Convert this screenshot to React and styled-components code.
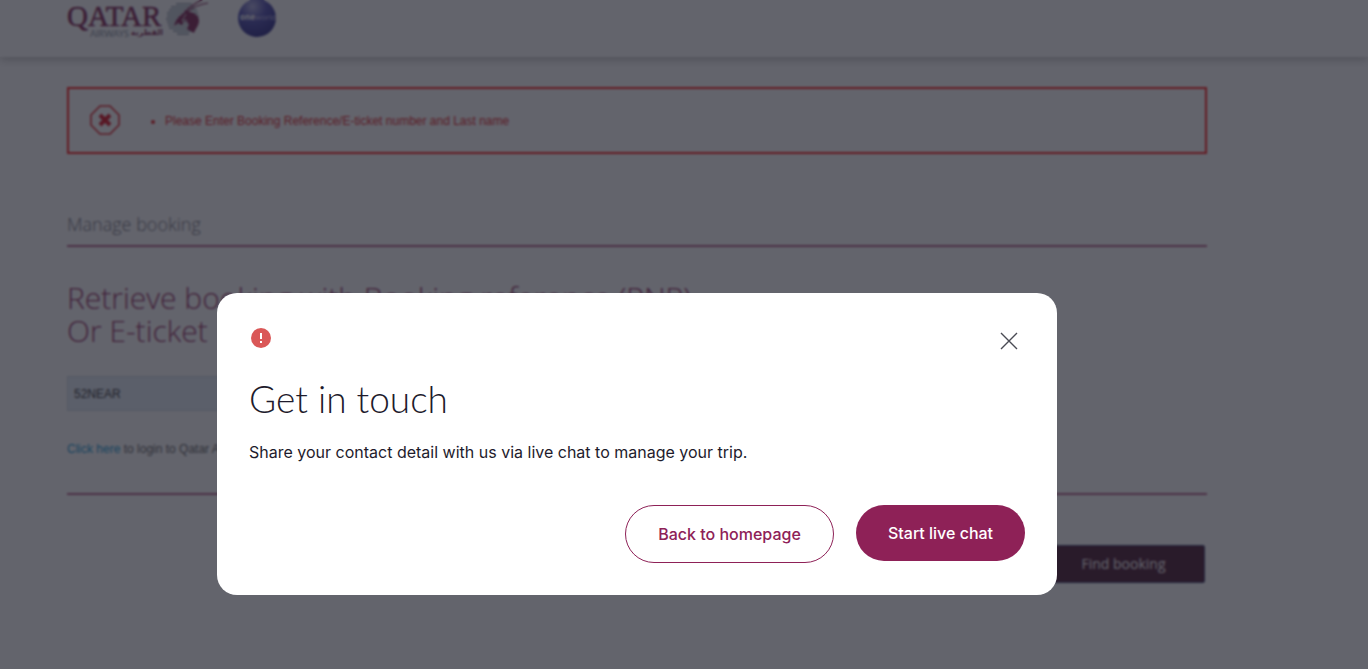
import React from "react";
import styled, { createGlobalStyle } from "styled-components";

const GlobalStyle = createGlobalStyle`
  *, *::before, *::after { box-sizing: border-box; }
  body {
    margin: 0;
    background: #fff;
    color: #4a4a55;
    font-family: "Liberation Sans", Arial, sans-serif;
    font-size: 12px;
  }
`;

const Page = styled.div`
  min-height: 100vh;
  overflow: hidden;
`;

const Header = styled.header`
  height: 57px;
  padding: 0 67px;
  display: flex;
  align-items: flex-start;
  gap: 28px;
  background: #fff;
  box-shadow: 0 3px 8px rgba(0, 0, 0, 0.25);
`;

const BrandLink = styled.a`
  display: block;
  line-height: 0;
`;

const Content = styled.main`
  max-width: 1274px;
  padding: 30px 67px 0;
`;

const ErrorBox = styled.div`
  display: flex;
  align-items: center;
  gap: 28px;
  height: 67px;
  padding: 0 20px;
  border: 2px solid #ff0a0a;
  color: #e00a10;
`;

const ErrorList = styled.ul`
  margin: 0;
  padding-left: 16px;
  line-height: 18px;
`;

const SectionTitle = styled.h1`
  margin: 58px 0 0;
  padding-bottom: 9px;
  border-bottom: 2px solid #b0557f;
  color: #6b6b75;
  font: 300 18px/24px "Open Sans", sans-serif;
`;

const FormTitle = styled.h2`
  margin: 34px 0 0;
  color: #8e2157;
  font: 300 30px/33px "Open Sans", sans-serif;
`;

const BookingForm = styled.form`
  margin: 0;
`;

const BookingInput = styled.input`
  display: block;
  width: 320px;
  height: 35px;
  margin-top: 29px;
  padding: 0 6px;
  border: 1px solid #ccd6e0;
  background: #e4eef8;
  color: #222;
  font: 12px "Liberation Sans", Arial, sans-serif;
`;

const LoginNote = styled.p`
  margin: 29px 0 0;
  padding-bottom: 35px;
  border-bottom: 2px solid #b0557f;
  color: #555;
  line-height: 18px;
`;

const LoginLink = styled.a`
  color: #0090d0;
  text-decoration: none;
`;

const FormActions = styled.div`
  display: flex;
  justify-content: flex-end;
  padding: 50px 2px 0;
`;

const FindButton = styled.button`
  width: 163px;
  height: 38px;
  padding: 0 0 2px;
  border: 1px solid #2a3468;
  border-radius: 2px;
  background: #3f0a24;
  color: #fff;
  font: 400 14px "Open Sans", sans-serif;
`;

const Overlay = styled.div`
  position: fixed;
  inset: 0;
  padding: 293px 94px 0 0;
  display: flex;
  align-items: flex-start;
  justify-content: center;
  background: rgba(33, 34, 45, 0.7);
  backdrop-filter: blur(1px);
`;

const Dialog = styled.section`
  width: 100%;
  max-width: 840px;
  padding: 32px;
  border-radius: 20px;
  background: #fff;
  color: #1e1b2c;
`;

const DialogTop = styled.div`
  display: flex;
  align-items: flex-start;
  justify-content: space-between;
  height: 48px;
`;

const CloseButton = styled.button`
  display: flex;
  padding: 0;
  border: 0;
  background: none;
  color: #4a4b54;
`;

const DialogTitle = styled.h2`
  margin: 0;
  font: 300 37px/52px Lato, sans-serif;
`;

const DialogText = styled.p`
  margin: 15px 0 0;
  font: 400 16px/24px Inter, sans-serif;
`;

const DialogActions = styled.div`
  display: flex;
  align-items: flex-start;
  justify-content: flex-end;
  gap: 22px;
  margin-top: 41px;
`;

const PillButton = styled.button`
  height: ${(p) => (p.$filled ? 56 : 58)}px;
  width: ${(p) => (p.$filled ? 169 : 209)}px;
  padding: 0;
  border: ${(p) => (p.$filled ? "0" : "1px solid #8e2157")};
  border-radius: 29px;
  background: ${(p) => (p.$filled ? "#8e2157" : "#fff")};
  color: ${(p) => (p.$filled ? "#fff" : "#8e2157")};
  font: 500 16px Inter, sans-serif;
  white-space: nowrap;
`;

function QatarLogo() {
  return (
    <svg width="143" height="42" viewBox="0 0 143 42" role="img" aria-label="Qatar Airways">
      <text x="0" y="26" fontFamily="Liberation Serif, serif" fontSize="29" fill="#7a1549" stroke="#7a1549" strokeWidth="0.6">QATAR</text>
      <text x="23" y="37" fontFamily="Lato, sans-serif" fontSize="9" fill="#7c8896">AIRWAYS</text>
      <text x="96" y="35" textAnchor="end" direction="ltr" fontFamily="DejaVu Sans, sans-serif" fontSize="8" fontWeight="700" fill="#7a1549">القطرية</text>
      <g stroke="#8b98a5" strokeWidth="1.6">
        <path d="M109 4H125M104 7H128M102 10H130M100 13H131M100 16H132M99 19H132M100 22H131M101 25H130M102 28H128M106 31H126M110 34H122" />
      </g>
      <path d="M107 26C109 19 113 15 117 13L119 10L123 12C128 13 132 16 132 21C132 25 129 28 127 33L120 29L122 24L117 21L115 25L111 23Z" fill="#7a1549" />
      <path d="M117 13C122 7 130 2 139 -2M119 13C126 7 133 4 141 3" fill="none" stroke="#7a1549" strokeWidth="1.2" />
      <path d="M119 14L115 21L119 20L121 26" fill="none" stroke="#c9ced4" strokeWidth="1" />
    </svg>
  );
}

function OneworldLogo() {
  return (
    <svg width="39" height="39" viewBox="0 0 39 39" role="img" aria-label="oneworld">
      <defs>
        <radialGradient id="globe" cx="38%" cy="20%" r="80%">
          <stop offset="0" stopColor="#aaa9de" />
          <stop offset="0.45" stopColor="#4543ac" />
          <stop offset="1" stopColor="#201e80" />
        </radialGradient>
      </defs>
      <circle cx="19" cy="18" r="19" fill="url(#globe)" />
      <text x="2" y="20" fontFamily="Open Sans, sans-serif" fontSize="8" fill="#b9b7e2">
        <tspan fontWeight="700" fill="#fff">one</tspan>world
      </text>
    </svg>
  );
}

function StopIcon() {
  return (
    <svg width="32" height="32" viewBox="0 0 32 32" fill="none" aria-hidden="true">
      <path d="M11 1H21L30 10V20L21 29H11L2 20V10Z" stroke="#e01018" strokeWidth="1.6" />
      <path d="M11 10L21 20M21 10L11 20" stroke="#d80010" strokeWidth="4" />
    </svg>
  );
}

function AlertIcon() {
  return (
    <svg width="24" height="24" viewBox="0 0 24 24" aria-hidden="true">
      <circle cx="12" cy="13" r="10" fill="#da5757" />
      <path d="M11 8H13V14H11ZM11 16H13V18H11Z" fill="#fff" />
    </svg>
  );
}

function CloseIcon() {
  return (
    <svg width="32" height="32" viewBox="0 0 32 32" fill="none" aria-hidden="true">
      <path d="M8 8L24 24M24 8L8 24" stroke="currentColor" strokeWidth="1.4" />
    </svg>
  );
}

export default function App() {
  return (
    <>
      <GlobalStyle />
      <Page>
        <Header>
          <BrandLink href="#home"><QatarLogo /></BrandLink>
          <BrandLink href="#oneworld"><OneworldLogo /></BrandLink>
        </Header>
        <Content>
          <ErrorBox role="alert">
            <StopIcon />
            <ErrorList>
              <li>Please Enter Booking Reference/E-ticket number and Last name</li>
            </ErrorList>
          </ErrorBox>
          <SectionTitle>Manage booking</SectionTitle>
          <FormTitle>
            Retrieve booking with Booking reference (PNR)
            <br />
            Or E-ticket
          </FormTitle>
          <BookingForm onSubmit={(e) => e.preventDefault()}>
            <BookingInput aria-label="Booking reference" defaultValue="52NEAR" />
            <LoginNote>
              <LoginLink href="#login">Click here</LoginLink> to login to Qatar Airways
            </LoginNote>
            <FormActions>
              <FindButton type="submit">Find booking</FindButton>
            </FormActions>
          </BookingForm>
        </Content>
      </Page>
      <Overlay>
        <Dialog role="dialog" aria-modal="true" aria-labelledby="dialog-title">
          <DialogTop>
            <AlertIcon />
            <CloseButton type="button" aria-label="Close"><CloseIcon /></CloseButton>
          </DialogTop>
          <DialogTitle id="dialog-title">Get in touch</DialogTitle>
          <DialogText>Share your contact detail with us via live chat to manage your trip.</DialogText>
          <DialogActions>
            <PillButton type="button">Back to homepage</PillButton>
            <PillButton type="button" $filled>Start live chat</PillButton>
          </DialogActions>
        </Dialog>
      </Overlay>
    </>
  );
}
